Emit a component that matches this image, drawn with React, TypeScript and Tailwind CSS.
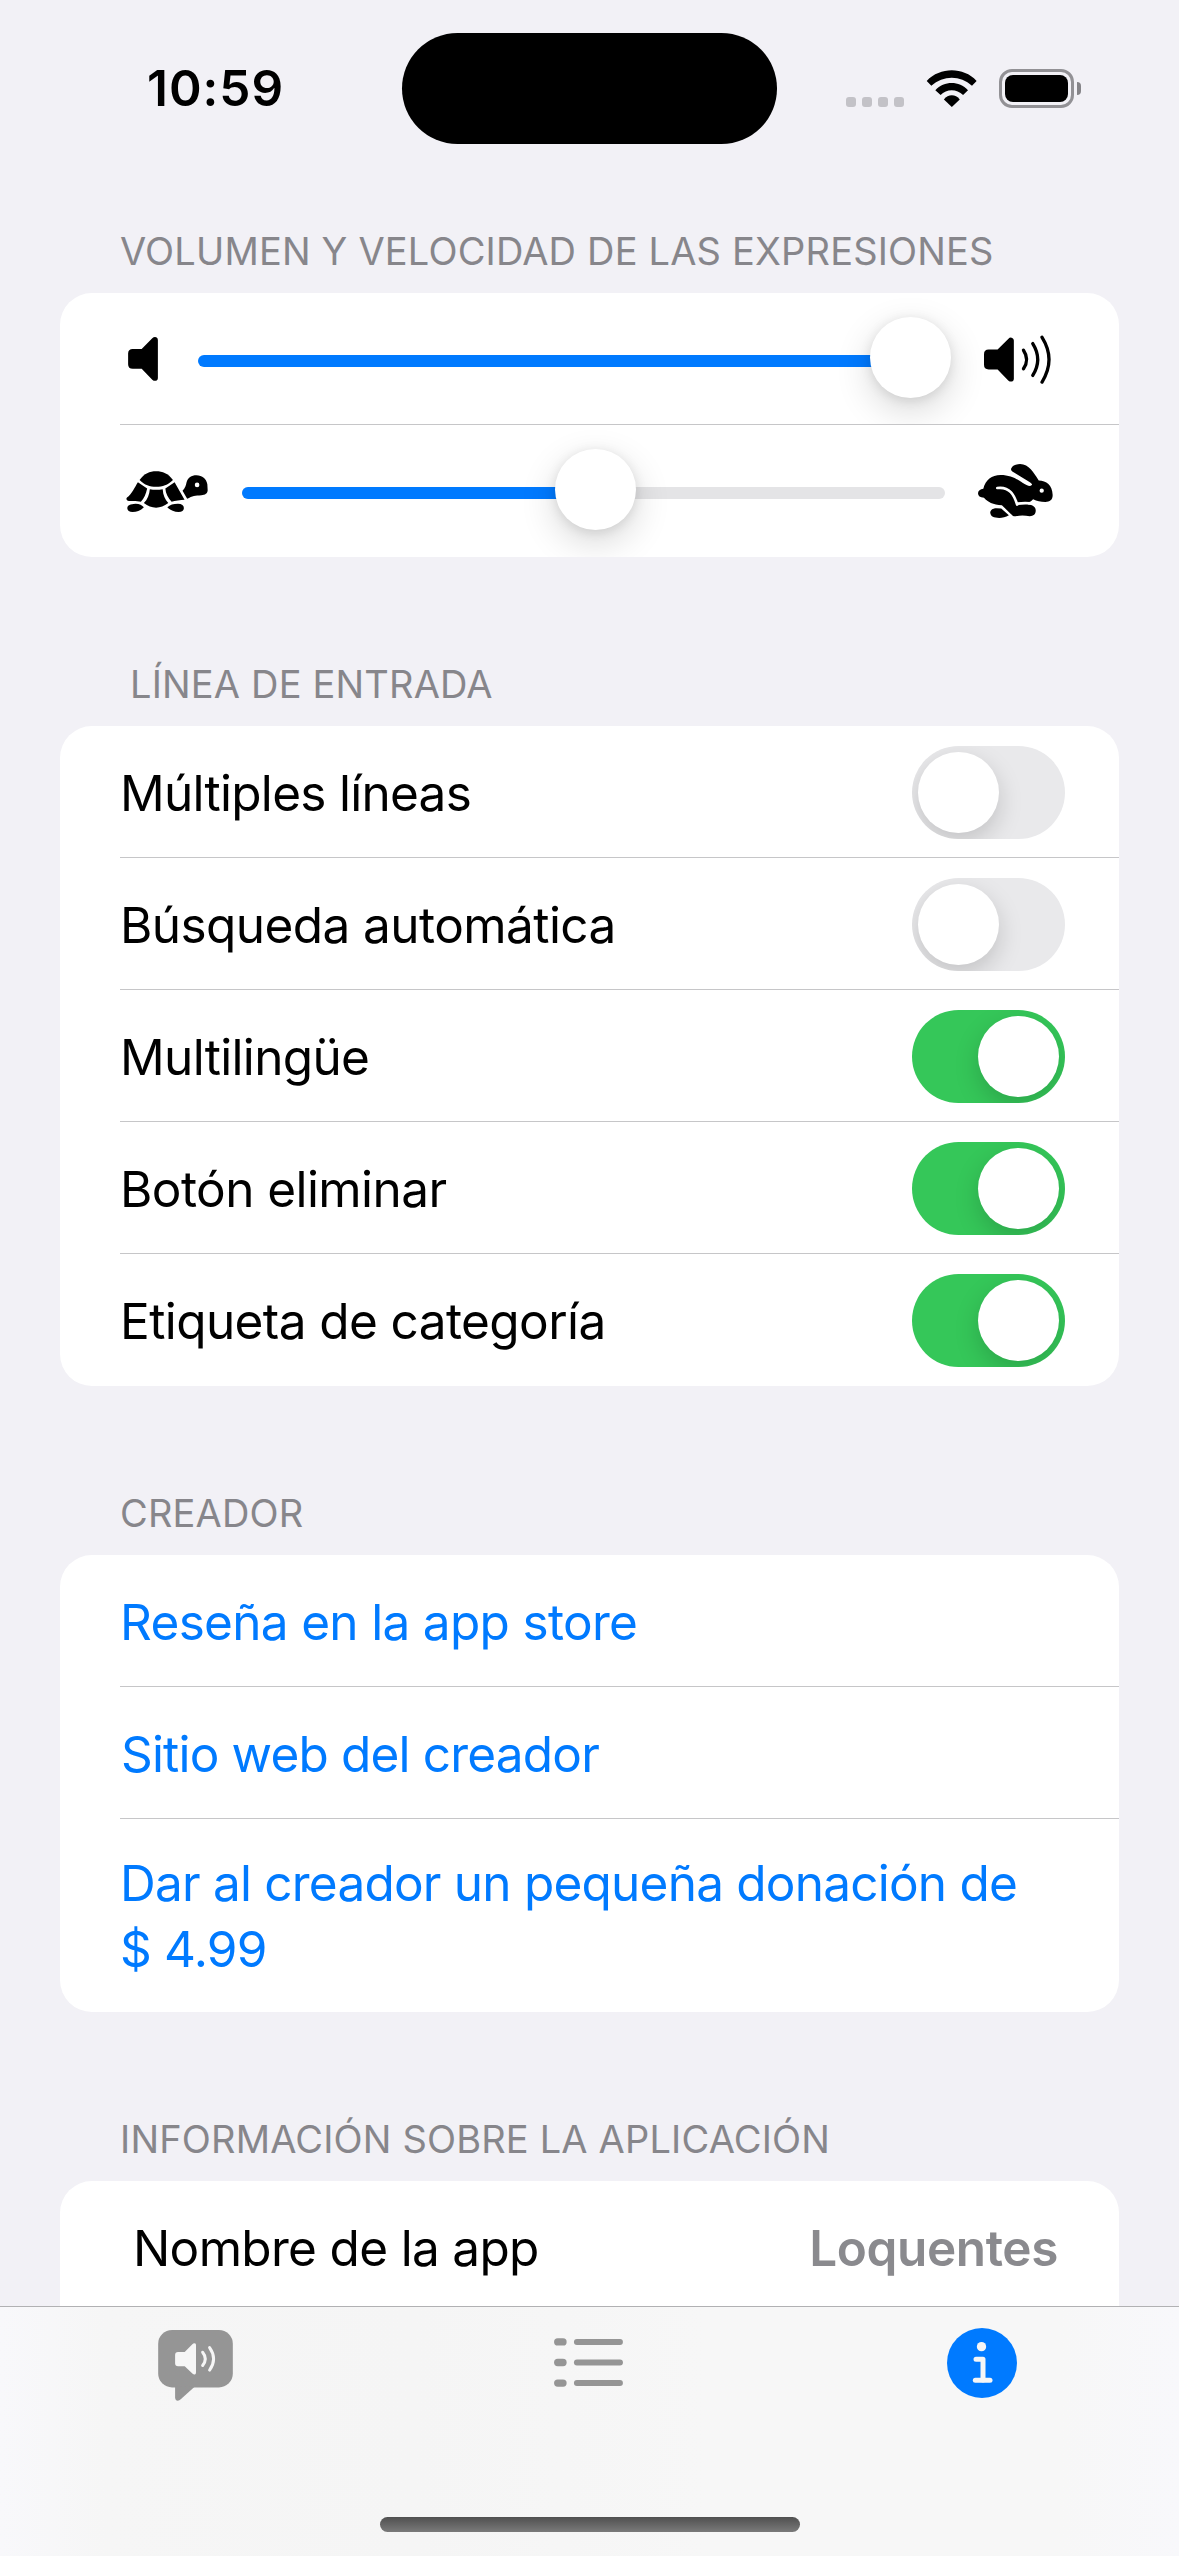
import { useState } from "react";
import type { ReactNode } from "react";
import clsx from "clsx";

const WifiIcon = () => (
  <svg viewBox="438 116 152 112" className="h-[37px] w-[51px]" fill="black">
    <path d="M439 149C480 106.500 550 106.500 590 149L576 164C541 131 489 131 453 164Z" />
    <path d="M465 177C492 148 537 148 564 177L549 192C530 172.500 499 172.500 481 192Z" />
    <path d="M491 205C504 188 526 188 539 205L515 228Z" />
  </svg>
);

const BatteryIcon = () => (
  <div className="flex items-center">
    <div className="h-[39px] w-[75px] rounded-[13px] border-[3px] border-[#929195] p-[3px]">
      <div className="h-full w-full rounded-[8px] bg-black" />
    </div>
    <div className="ml-[3px] h-[13px] w-[4px] rounded-r-full bg-[#858488]" />
  </div>
);

const speakerCone =
  "M552 223Q552 209 566 209L593 209L625 177Q631 171 637 174Q642 176 642 182V298Q642 303 637 305Q631 307 625 302L593 269L566 269Q552 269 552 255Z";

const SpeakerIcon = () => (
  <svg viewBox="552 173 90 133" className="h-[44px] w-[30px] shrink-0">
    <path d={speakerCone} />
  </svg>
);

const SpeakerLoudIcon = () => (
  <svg viewBox="552 166 202 146" className="mt-[2px] h-[49px] w-[67px] shrink-0">
    <path d={speakerCone} />
    <g fill="none" stroke="black" strokeWidth="10" strokeLinecap="round">
      <path d="M671 211Q690 239 671 267" />
      <path d="M699 191Q729 239 699 287" />
      <path d="M727 172Q769 239 727 307" />
    </g>
  </svg>
);

const TurtleIcon = () => (
  <svg viewBox="228 572 246 124" className="mt-px h-[41px] w-[82px] shrink-0">
    <path d="M268 599C283 580 298 573 318 573C338 573 354 580 369 599C353 614 338 620 318 620C298 620 284 614 268 599Z" />
    <path d="M263 606L291 625C287 642 282 655 272 665C262 662 246 662 236 663C229 663 226 656 230 652C244 643 254 620 263 606Z" />
    <path d="M299 627Q318 631 338 627C339 645 345 658 355 669C342 679 331 683 318 683C305 683 293 678 281 669C292 658 298 642 299 627Z" />
    <path d="M346 625L374 606L404 659C392 660 375 662 365 665C354 654 347 640 346 625Z" />
    <path
      fillRule="evenodd"
      d="M398 632C406 624 408 616 410 607C414 592 425 585 440 585C458 585 470 596 473 612L474 630C474 639 466 645 455 645C436 646 428 647 412 656ZM442 607A7 7 0 1 0 442 621A7 7 0 1 0 442 607Z"
    />
    <path d="M231 684C231 675 240 672 256 671C268 671 276 676 281 682C272 691 260 696 247 696C237 696 231 692 231 684Z" />
    <path d="M352 682C360 674 370 671 384 671C396 671 402 676 402 684C402 692 396 696 386 696C372 696 360 690 352 682Z" />
  </svg>
);

const RabbitIcon = () => (
  <svg viewBox="534 552 226 162" className="h-[54px] w-[75px] shrink-0">
    <path d="M534 640C534 632 541 627 550 626C557 600 575 585 602 585C635 585 655 600 668 608C680 616 690 620 695 616C700 613 694 609 688 605L645 579C636 574 632 570 634 565C638 556 648 552 661 552C688 553 701 577 717 601C740 601 758 615 759 645C759 660 750 666 737 666C722 666 712 664 700 658C695 664 690 667 684 667L684 674C700 675 708 682 708 692C708 703 701 709 690 709C675 706 660 706 648 709C641 710 637 706 633 702L606 676C580 675 562 665 552 653C540 653 534 648 534 640Z" />
    <path d="M571 698C571 689 580 685 590 685L604 686L627 706C618 712 607 714 598 714C582 714 571 710 571 698Z" />
    <g fill="none" stroke="white" strokeWidth="8" strokeLinecap="round">
      <path d="M592 624C630 619 643 645 652 674" />
      <path d="M653 671Q668 669 690 670" />
    </g>
    <circle cx="726" cy="632" r="6.500" fill="white" />
  </svg>
);

const ChatSpeakerIcon = () => (
  <svg viewBox="474 270 225 214" className="mr-[2px] mt-[23px] h-[71px] w-[75px]">
    <g fill="#959595">
      <rect x="474" y="270" width="225" height="173" rx="42" />
      <path d="M525 440V474Q526 483 533 483Q538 483 542 479L583 442Z" />
    </g>
    <path
      fill="#f6f6f6"
      d="M525 345Q525 336 534 336L554 336L577 313Q582 308 586 311Q588 312 588 316V398Q588 402 585 404Q581 405 577 401L554 379L534 379Q525 379 525 370Z"
    />
    <g fill="none" stroke="#f6f6f6" strokeWidth="9" strokeLinecap="round">
      <path d="M608 337Q624 357 608 377" />
      <path d="M629 323Q653 357 629 391" />
    </g>
  </svg>
);

const ListIcon = () => (
  <svg
    viewBox="222 144 208 148"
    className="mr-[2px] mt-[31px] h-[49px] w-[69px]"
    fill="#959595"
  >
    {[0, 62, 124].map((y) => (
      <g key={y}>
        <rect x="222" y={145 + y} width="38" height="22" rx="11" />
        <rect x="282" y={147 + y} width="148" height="18" rx="9" />
      </g>
    ))}
  </svg>
);

const InfoIcon = () => (
  <svg viewBox="501 504 210 210" className="mr-px mt-[21px] h-[70px] w-[70px]">
    <circle cx="606" cy="609" r="105" fill="#007aff" />
    <circle cx="604.500" cy="560" r="14" fill="#f6f6f6" />
    <g
      fill="none"
      stroke="#f6f6f6"
      strokeWidth="15"
      strokeLinecap="round"
      strokeLinejoin="round"
    >
      <path d="M588 598H609V660" />
      <path d="M586 661H630" />
    </g>
  </svg>
);

const StatusBar = () => (
  <header className="grid h-[177px] shrink-0 grid-cols-[402px_375px_402px] items-center">
    <div className="pl-[147px] text-[49.500px] font-semibold tracking-[1px]">10:59</div>
    <div className="h-[111px] rounded-full bg-black" />
    <div className="flex items-center pl-[69px]">
      <div className="mr-[22px] mt-[27px] flex gap-[6px]">
        {[0, 1, 2, 3].map((i) => (
          <span key={i} className="h-[10px] w-[10px] rounded-[3px] bg-[#c3c2c7]" />
        ))}
      </div>
      <WifiIcon />
      <div className="ml-[22px]">
        <BatteryIcon />
      </div>
    </div>
  </header>
);

type SectionProps = {
  title: string;
  className?: string;
  children: ReactNode;
};

const Section = ({ title, className, children }: SectionProps) => (
  <section className="shrink-0 px-[60px]">
    <h2
      className={clsx(
        "flex items-end pb-[18px] text-[38px] leading-[48px] tracking-[0.170px] text-[#87868b]",
        className ?? "h-[169px] pl-[60px]"
      )}
    >
      {title}
    </h2>
    <div className="overflow-hidden rounded-[32px] bg-white">{children}</div>
  </section>
);

const Divider = () => <div className="ml-[60px] h-px bg-[#c6c6c8]" />;

type SliderProps = { value: number; onChange: (value: number) => void };

// The thumb runs 3px past the end of the track
const Slider = ({ value, onChange }: SliderProps) => (
  <div className="relative h-[81px] flex-1">
    <div className="mt-[37px] h-[12px] overflow-hidden rounded-full bg-[#e4e4e6]">
      <div className="h-full bg-[#007aff]" style={{ width: `${value}%` }} />
    </div>
    <div
      className="absolute -top-px h-[81px] w-[81px] rounded-full bg-white shadow-[0_12px_36px_rgba(0,0,0,0.160),0_2px_12px_rgba(0,0,0,0.100)]"
      style={{ left: `calc((100% - 78px) * ${value / 100})` }}
    />
    <input
      type="range"
      value={value}
      onChange={(e) => onChange(Number(e.target.value))}
      className="absolute inset-0 h-full w-full opacity-0"
    />
  </div>
);

type ToggleProps = { label: string; tracking: string; defaultOn: boolean };

const ToggleRow = ({ label, tracking, defaultOn }: ToggleProps) => {
  const [on, setOn] = useState<boolean>(defaultOn);

  return (
    <div className="flex h-[131px] items-center justify-between pl-[60px] pr-[54px]">
      <span className={clsx("pt-[3px]", tracking)}>{label}</span>
      <button
        role="switch"
        aria-checked={on}
        aria-label={label}
        onClick={() => setOn(!on)}
        className={clsx(
          "mt-[2px] flex h-[93px] w-[153px] overflow-hidden rounded-full p-[6px]",
          on ? "justify-end bg-[#35c759]" : "justify-start bg-[#e9e9eb]"
        )}
      >
        <span className="h-[81px] w-[81px] rounded-full bg-white shadow-[0_9px_24px_rgba(0,0,0,0.170)]" />
      </button>
    </div>
  );
};

const toggles: ToggleProps[] = [
  { label: "Múltiples líneas", tracking: "tracking-[-0.720px]", defaultOn: false },
  { label: "Búsqueda automática", tracking: "tracking-[-0.570px]", defaultOn: false },
  { label: "Multilingüe", tracking: "tracking-[-0.670px]", defaultOn: true },
  { label: "Botón eliminar", tracking: "tracking-[-0.570px]", defaultOn: true },
  { label: "Etiqueta de categoría", tracking: "tracking-[-0.590px]", defaultOn: true },
];

const App = () => {
  const [volume, setVolume] = useState<number>(100);
  const [speed, setSpeed] = useState<number>(50);

  return (
    <div className="flex h-[2556px] w-[1179px] flex-col overflow-hidden bg-[#f2f1f6] font-[Inter,sans-serif] text-black">
      <main className="flex min-h-0 flex-1 flex-col overflow-hidden">
        <StatusBar />
        <Section
          title="VOLUMEN Y VELOCIDAD DE LAS EXPRESIONES"
          className="h-[116px] pl-[60px]"
        >
          <div className="flex h-[131px] items-center overflow-hidden px-[68px]">
            <SpeakerIcon />
            <div className="flex flex-1 pl-[40px] pr-[36px]">
              <Slider value={volume} onChange={setVolume} />
            </div>
            <SpeakerLoudIcon />
          </div>
          <Divider />
          <div className="mb-px flex h-[131px] items-center px-[66px]">
            <TurtleIcon />
            <div className="flex flex-1 pl-[34px] pr-[33px]">
              <Slider value={speed} onChange={setSpeed} />
            </div>
            <RabbitIcon />
          </div>
        </Section>

        <Section title="LÍNEA DE ENTRADA" className="h-[169px] pl-[70px]">
          <div className="pb-px text-[49.500px]">
            {toggles.map((toggle, i) => (
              <div key={toggle.label}>
                {i > 0 && <Divider />}
                <ToggleRow {...toggle} />
              </div>
            ))}
          </div>
        </Section>

        <Section title="CREADOR">
          <div className="text-[49.500px] leading-[66px] text-[#007aff]">
            <div className="flex h-[131px] items-center pl-[60px] pt-[3px] tracking-[-0.680px]">
              Reseña en la app store
            </div>
            <Divider />
            <div className="flex h-[131px] items-center pl-[61px] pt-[3px] tracking-[-0.820px]">
              Sitio web del creador
            </div>
            <Divider />
            <div className="flex h-[193px] items-center pl-[60px] tracking-[-0.780px]">
              <p>
                Dar al creador un pequeña donación de
                <br />$ 4.99
              </p>
            </div>
          </div>
        </Section>

        <Section title="INFORMACIÓN SOBRE LA APLICACIÓN">
          <div className="pb-[132px]">
            <div className="flex h-[131px] items-center justify-between pl-[73px] pr-[61px] pt-[3px] text-[49.500px]">
              <span className="tracking-[-0.670px]">Nombre de la app</span>
              <span className="font-semibold tracking-[-0.400px] text-[#8a8a8e]">
                Loquentes
              </span>
            </div>
            <Divider />
          </div>
        </Section>
      </main>

      <nav className="flex h-[250px] shrink-0 flex-col justify-between border-t border-[#b1b1b3] bg-[linear-gradient(90deg,#f8f8fb_0%,#f6f6f6_9%,#f5f5f5_35%,#f7f7f7_60%,#f7f7f7_90%,#f8f8fb_100%)]">
        <div className="grid grid-cols-3 justify-items-center">
          <ChatSpeakerIcon />
          <ListIcon />
          <InfoIcon />
        </div>
        <div className="mx-auto mb-[24px] h-[15px] w-[420px] rounded-full bg-linear-to-b from-[#505050] to-[#7a7a7a]" />
      </nav>
    </div>
  );
};

export default App;
